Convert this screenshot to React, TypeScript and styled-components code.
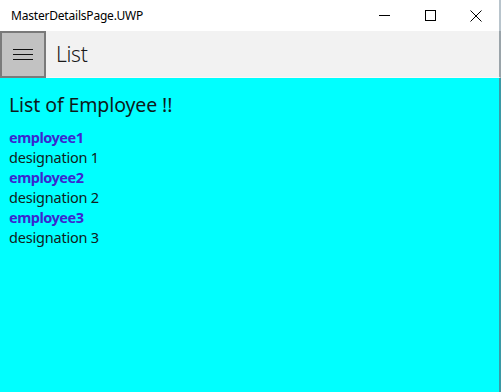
import React from "react";
import styled, { createGlobalStyle } from "styled-components";

const GlobalStyle = createGlobalStyle`
  html, body {
    margin: 0;
    padding: 0;
    overflow: hidden;
    background: #ffffff;
  }
`;

const Window = styled.div`
  width: 501px;
  height: 392px;
  display: flex;
  flex-direction: column;
  box-sizing: border-box;
  font-family: "Noto Sans", "Open Sans", sans-serif;
`;

const TitleBar = styled.div`
  height: 31px;
  display: flex;
  align-items: center;
  background: #ffffff;
  padding-left: 11px;
  border-right: 2px solid #b8c4cc;
`;

const WindowTitle = styled.div`
  flex: 1;
  font-size: 12px;
  color: #000000;
  letter-spacing: -0.2px;
`;

const CaptionButton = styled.div`
  width: 46px;
  height: 31px;
  display: flex;
  align-items: center;
  justify-content: center;
`;

const Header = styled.div`
  height: 47px;
  display: flex;
  align-items: center;
  background: #f2f2f2;
  border-right: 2px solid #9aa4aa;
  border-bottom: 1px solid #f8f8f8;
  box-sizing: border-box;
`;

const MenuButton = styled.div`
  width: 46px;
  height: 47px;
  box-sizing: border-box;
  border: 2px solid #7a7a7a;
  background: #c2c2c2;
  display: flex;
  align-items: center;
  justify-content: center;
`;

const PageTitle = styled.div`
  margin-left: 10px;
  font-size: 21px;
  font-weight: 300;
  color: #1a1a1a;
  padding-bottom: 1px;
  letter-spacing: -0.3px;
`;

const Content = styled.div`
  flex: 1;
  background: #00ffff;
  border-right: 2px solid #3a9aa6;
  padding: 14px 9px;
`;

const Heading = styled.div`
  font-size: 19.5px;
  color: #0d1a1a;
  line-height: 26px;
  margin-bottom: 9px;
  letter-spacing: -0.1px;
`;

const Name = styled.div`
  font-size: 14.5px;
  font-weight: 700;
  line-height: 20px;
  color: #3b27cf;
  letter-spacing: -0.5px;
`;

const Designation = styled.div`
  font-size: 14.5px;
  line-height: 20px;
  color: #102020;
  letter-spacing: -0.2px;
`;

const employees = [
  { name: "employee1", designation: "designation 1" },
  { name: "employee2", designation: "designation 2" },
  { name: "employee3", designation: "designation 3" },
];

export default function App() {
  return (
    <>
      <GlobalStyle />
      <Window>
        <TitleBar>
          <WindowTitle>MasterDetailsPage.UWP</WindowTitle>
          <CaptionButton>
            <svg width="11" height="11" viewBox="0 0 11 11">
              <path d="M0 5.5h11" stroke="#000" strokeWidth="1" />
            </svg>
          </CaptionButton>
          <CaptionButton>
            <svg width="11" height="11" viewBox="0 0 11 11">
              <rect x="0.5" y="0.5" width="10" height="10" fill="none" stroke="#000" strokeWidth="1" />
            </svg>
          </CaptionButton>
          <CaptionButton>
            <svg width="12" height="12" viewBox="0 0 12 12">
              <path d="M0.5 0.5l11 11M11.5 0.5l-11 11" stroke="#000" strokeWidth="1" />
            </svg>
          </CaptionButton>
        </TitleBar>
        <Header>
          <MenuButton>
            <svg width="20" height="12" viewBox="0 0 20 12">
              <path d="M0 1.5h20M0 6.5h20M0 11.5h20" stroke="#111" strokeWidth="1" />
            </svg>
          </MenuButton>
          <PageTitle>List</PageTitle>
        </Header>
        <Content>
          <Heading>List of Employee !!</Heading>
          {employees.map((e) => (
            <React.Fragment key={e.name}>
              <Name>{e.name}</Name>
              <Designation>{e.designation}</Designation>
            </React.Fragment>
          ))}
        </Content>
      </Window>
    </>
  );
}
